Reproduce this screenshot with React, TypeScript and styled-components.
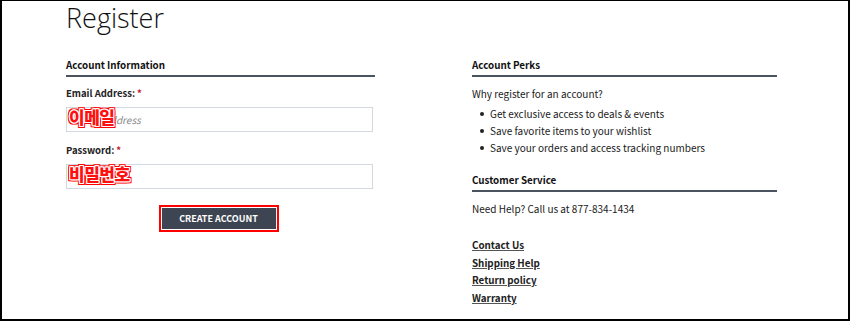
import React from 'react';
import styled, { createGlobalStyle } from 'styled-components';

const GlobalStyle = createGlobalStyle`
  html, body {
    margin: 0;
    padding: 0;
    background: #ffffff;
  }
  body {
    font-family: "Noto Sans CJK KR", "Open Sans", sans-serif;
    color: #222;
  }
`;

const Frame = styled.div`
  box-sizing: border-box;
  width: 850px;
  height: 321px;
  border: 2px solid #000;
  border-top-width: 1px;
  background: #fff;
  overflow: hidden;
  padding: 0 0 0 64px;
`;

const Title = styled.h1`
  margin: 1px 0 0 0;
  font-family: "Open Sans", sans-serif;
  font-size: 27px;
  font-weight: 300;
  line-height: 32px;
  color: #111;
`;

const Columns = styled.div`
  display: grid;
  grid-template-columns: 309px 305px;
  column-gap: 97px;
  margin-top: 23px;
`;

const Column = styled.div`
  display: flex;
  flex-direction: column;
`;

const SectionTitle = styled.h2<{ $gap?: number }>`
  margin: ${({ $gap }) => $gap ?? 0}px 0 0 0;
  padding-bottom: 2px;
  font-size: 9.8px;
  font-weight: 700;
  line-height: 16px;
  color: #111;
  border-bottom: 2px solid #4b5260;
`;

const Form = styled.form`
  display: flex;
  flex-direction: column;
  padding-top: 9px;
`;

const Label = styled.label`
  font-size: 9.5px;
  font-weight: 700;
  line-height: 14px;
  color: #222;
  margin-bottom: 5px;
`;

const Required = styled.span`
  color: #c8102e;
  margin-left: 2px;
`;

const Field = styled.div<{ $after?: number }>`
  position: relative;
  width: 307px;
  margin-bottom: ${({ $after }) => $after ?? 11}px;
`;

const Input = styled.input`
  box-sizing: border-box;
  width: 100%;
  height: 25px;
  border: 1px solid #d3d8e0;
  padding: 0 8px;
  font-family: inherit;
  font-size: 10px;
  font-style: italic;
  color: #333;
  outline: none;

  &::placeholder {
    color: #8a8a8a;
  }
`;

const Annotation = styled.span`
  position: absolute;
  left: 3px;
  top: 1px;
  font-family: "Noto Sans CJK KR", sans-serif;
  font-size: 17px;
  font-weight: 900;
  line-height: 22px;
  letter-spacing: -0.5px;
  color: #ff1010;
  pointer-events: none;
  text-shadow:
    1px 0 0 #fff, -1px 0 0 #fff, 0 1px 0 #fff, 0 -1px 0 #fff,
    1px 1px 0 #fff, -1px -1px 0 #fff, 1px -1px 0 #fff, -1px 1px 0 #fff,
    2px 0 0 #f00, -2px 0 0 #f00, 0 2px 0 #f00, 0 -2px 0 #f00,
    2px 2px 0 #f00, -2px -2px 0 #f00, 2px -2px 0 #f00, -2px 2px 0 #f00;
`;

const ButtonRow = styled.div`
  display: flex;
  justify-content: center;
  padding-right: 4px;
`;

const Highlight = styled.div`
  border: 2px solid #ff0000;
  padding: 1px;
  display: flex;
`;

const SubmitButton = styled.button`
  width: 114px;
  height: 21px;
  border: none;
  background: #3e4552;
  color: #fff;
  font-family: inherit;
  font-size: 9px;
  font-weight: 700;
  text-transform: uppercase;
  cursor: pointer;
`;

const Text = styled.p<{ $gap?: number }>`
  margin: ${({ $gap }) => $gap ?? 0}px 0 0 0;
  font-size: 10px;
  line-height: 17px;
  color: #1a1a1a;
`;

const PerkList = styled.ul`
  list-style: none;
  margin: 3px 0 0 0;
  padding: 0 0 0 8px;
`;

const Perk = styled.li`
  position: relative;
  padding-left: 10px;
  font-size: 10px;
  line-height: 17px;
  color: #1a1a1a;

  &::before {
    content: '';
    position: absolute;
    left: 0;
    top: 7px;
    width: 4px;
    height: 4px;
    border-radius: 50%;
    background: #222;
  }
`;

const LinkList = styled.div`
  display: flex;
  flex-direction: column;
  margin-top: 20px;
`;

const HelpLink = styled.a`
  font-size: 9.8px;
  font-weight: 700;
  line-height: 17.5px;
  color: #222;
  text-decoration: underline;
  text-decoration-color: #555;
  text-underline-offset: 1px;
  align-self: flex-start;
`;

const perks = [
  'Get exclusive access to deals & events',
  'Save favorite items to your wishlist',
  'Save your orders and access tracking numbers',
];

const links = ['Contact Us', 'Shipping Help', 'Return policy', 'Warranty'];

export default function App() {
  return (
    <>
      <GlobalStyle />
      <Frame>
        <Title>Register</Title>
        <Columns>
          <Column>
            <SectionTitle>Account Information</SectionTitle>
            <Form onSubmit={(e) => e.preventDefault()}>
              <Label htmlFor="email">
                Email Address:<Required>*</Required>
              </Label>
              <Field>
                <Input id="email" type="email" placeholder="Email Address" />
                <Annotation>이메일</Annotation>
              </Field>
              <Label htmlFor="password">
                Password:<Required>*</Required>
              </Label>
              <Field $after={16}>
                <Input id="password" type="password" placeholder="Password" />
                <Annotation>비밀번호</Annotation>
              </Field>
              <ButtonRow>
                <Highlight>
                  <SubmitButton type="submit">Create Account</SubmitButton>
                </Highlight>
              </ButtonRow>
            </Form>
          </Column>
          <Column>
            <SectionTitle>Account Perks</SectionTitle>
            <Text $gap={8}>Why register for an account?</Text>
            <PerkList>
              {perks.map((p) => (
                <Perk key={p}>{p}</Perk>
              ))}
            </PerkList>
            <SectionTitle $gap={16}>Customer Service</SectionTitle>
            <Text $gap={8}>Need Help? Call us at 877-834-1434</Text>
            <LinkList>
              {links.map((l) => (
                <HelpLink key={l} href="#">
                  {l}
                </HelpLink>
              ))}
            </LinkList>
          </Column>
        </Columns>
      </Frame>
    </>
  );
}
